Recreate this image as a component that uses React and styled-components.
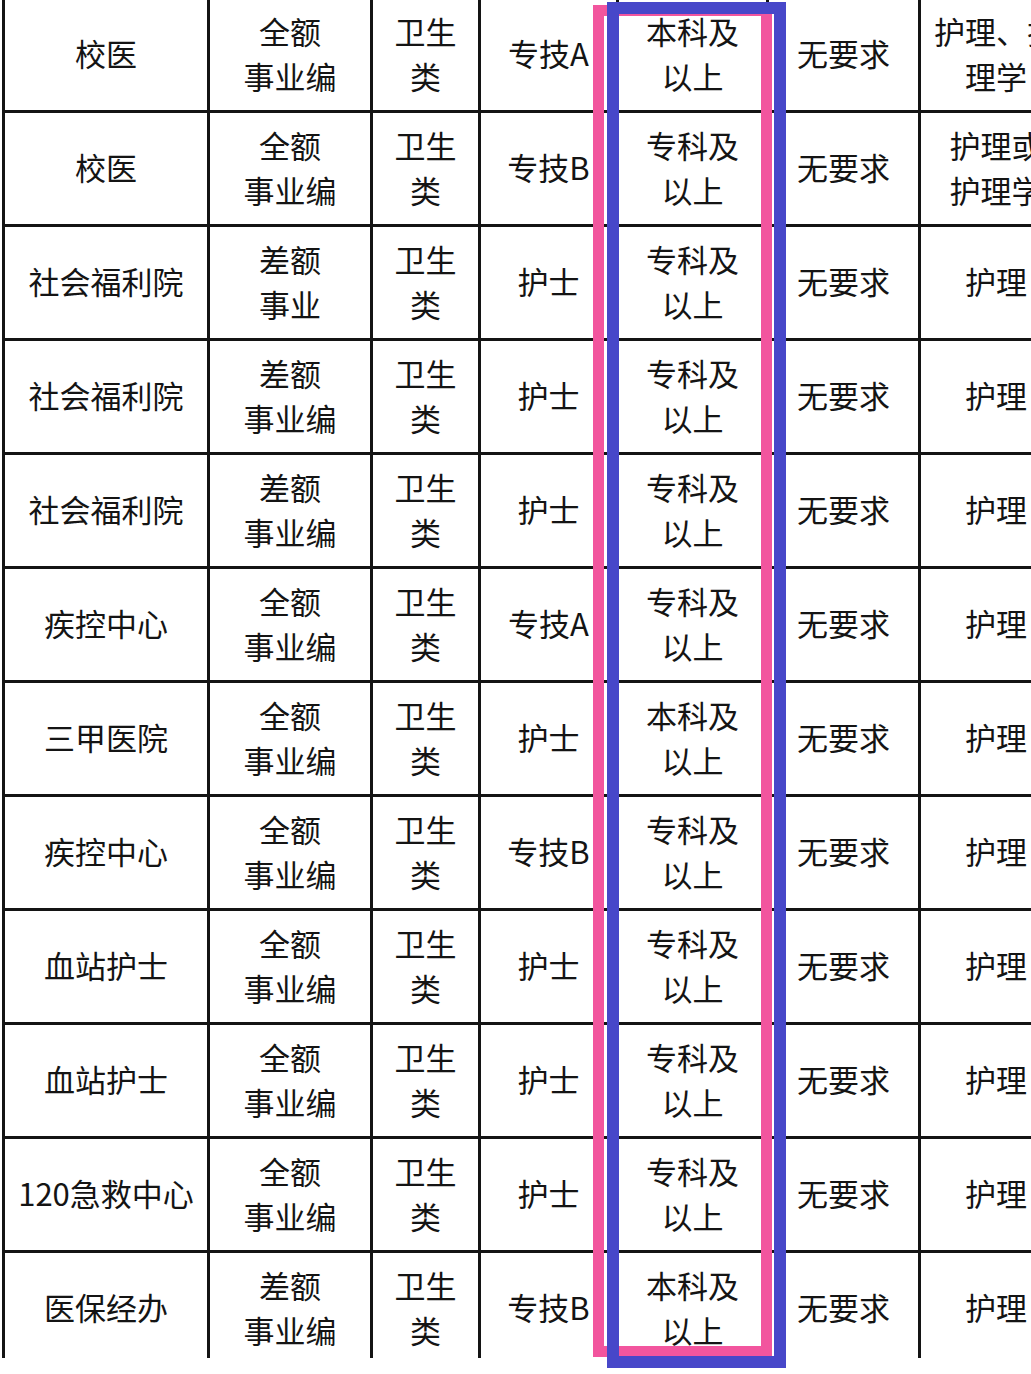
import styled, {createGlobalStyle} from "styled-components";


const GlobalStyle = createGlobalStyle`
    html, body {
        margin: 0;
        padding: 0;
        background: #ffffff;
        overflow: hidden;
    }
`;


const Page = styled.div`
    position: relative;
    width: 1031px;
    height: 1374px;
    overflow: hidden;
    background: #ffffff;
`;

const TableClip = styled.div`
    height: 1359px;
    margin-top: -1px;
    overflow: hidden;
`;

const Table = styled.div`
    display: grid;
    grid-template-columns: 202px 160px 105px 135px 147px 149px 150px;
    grid-auto-rows: 111px;
    gap: 3px;
    width: max-content;
    margin-left: 2px;
    padding: 0 3px;
    background: #141414;
    font-family: "Noto Sans CJK SC", "Microsoft YaHei", sans-serif;
    font-size: 31px;
    line-height: 45px;
    color: #141414;
`;

const Cell = styled.div`
    display: flex;
    flex-direction: column;
    align-items: center;
    justify-content: center;
    background: #ffffff;
    text-align: center;
    white-space: nowrap;
    padding-bottom: 4px;
`;

const Frame = styled.div`
    position: absolute;
    left: ${({$left}) => $left}px;
    top: ${({$top}) => $top}px;
    width: ${({$width}) => $width}px;
    height: ${({$height}) => $height}px;
    box-sizing: border-box;
    border: ${({$stroke}) => $stroke}px solid ${({$color}) => $color};
    pointer-events: none;
`;


const rows = [
    ["校医", "全额|事业编", "卫生|类", "专技A", "本科及|以上", "无要求", "护理、护|理学"],
    ["校医", "全额|事业编", "卫生|类", "专技B", "专科及|以上", "无要求", "护理或|护理学"],
    ["社会福利院", "差额|事业", "卫生|类", "护士", "专科及|以上", "无要求", "护理"],
    ["社会福利院", "差额|事业编", "卫生|类", "护士", "专科及|以上", "无要求", "护理"],
    ["社会福利院", "差额|事业编", "卫生|类", "护士", "专科及|以上", "无要求", "护理"],
    ["疾控中心", "全额|事业编", "卫生|类", "专技A", "专科及|以上", "无要求", "护理"],
    ["三甲医院", "全额|事业编", "卫生|类", "护士", "本科及|以上", "无要求", "护理"],
    ["疾控中心", "全额|事业编", "卫生|类", "专技B", "专科及|以上", "无要求", "护理"],
    ["血站护士", "全额|事业编", "卫生|类", "护士", "专科及|以上", "无要求", "护理"],
    ["血站护士", "全额|事业编", "卫生|类", "护士", "专科及|以上", "无要求", "护理"],
    ["120急救中心", "全额|事业编", "卫生|类", "护士", "专科及|以上", "无要求", "护理"],
    ["医保经办", "差额|事业编", "卫生|类", "专技B", "本科及|以上", "无要求", "护理"],
];


function App() {
    return (
        <>
            <GlobalStyle/>
            <Page>
                <TableClip>
                    <Table>
                        {rows.map((row, r) => row.map((text, c) => (
                            <Cell key={`${r}-${c}`}>
                                {text.split("|").map((line) => (
                                    <span key={line}>{line}</span>
                                ))}
                            </Cell>
                        )))}
                    </Table>
                </TableClip>
                <Frame $left={593} $top={5} $width={179} $height={1352} $stroke={11} $color="#f2559e"/>
                <Frame $left={607} $top={2} $width={179} $height={1366} $stroke={12} $color="#4747c9"/>
            </Page>
        </>
    );
}

export default App;
